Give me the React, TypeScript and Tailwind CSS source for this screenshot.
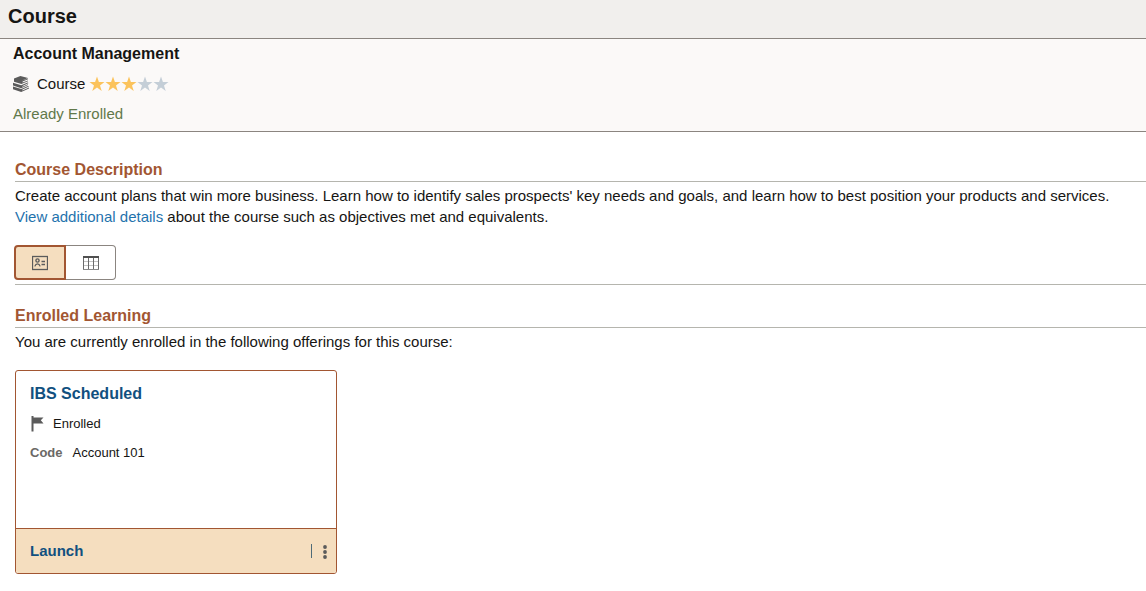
import React from "react";

const star = "M8 0.6 L9.9 6 L15.5 6 L11 9.4 L12.7 15 L8 11.6 L3.3 15 L5 9.4 L0.5 6 L6.1 6 Z";

function Stars({ value, total }: { value: number; total: number }) {
  return (
    <span role="img" aria-label={`${value} of ${total} stars`} className="flex">
      {Array.from({ length: total }, (_, i) => (
        <svg
          key={i}
          viewBox="0 0 16 16"
          className={i < value ? "size-4 fill-[#fbc35c]" : "size-4 fill-[#c4ced7]"}
        >
          <path d={star} />
        </svg>
      ))}
    </span>
  );
}

function BooksIcon() {
  return (
    <svg viewBox="0 0 16 16" className="size-4" aria-hidden="true">
      <g fill="#5b5b5b">
        <path d="M1 2.4 L7.4 0 L15 1.9 L8.4 4.7 L15 2.5 V3.2 L9.6 5.6 V6.6 L15 4.4 V5.2 L8.4 8.1 L1 5.8 Z" />
        <path d="M0 6.7 L8.2 9.3 L14.6 6.4 L15.6 7 L9.4 9.9 V10.8 L15 8.3 V9.1 L8.2 12.2 L0 9.6 Z" />
        <path d="M0 10.4 L8.2 13.1 L15 10 L16 10.6 L9.4 13.6 V14.4 L16 11.5 V12.4 L8.2 16 L0 13.2 Z" />
      </g>
    </svg>
  );
}

function CardIcon() {
  return (
    <svg viewBox="0 0 16 16" className="size-4" fill="none" stroke="#5b5b5b" aria-hidden="true">
      <rect x="0.5" y="1.5" width="15" height="13" strokeWidth="1.3" />
      <circle cx="5.5" cy="5.5" r="1.6" strokeWidth="1.4" />
      <path d="M2.8 11.4 C3.4 9.6 4.4 8.8 5.5 8.8 C6.6 8.8 7.6 9.6 8.2 11.4" strokeWidth="1.3" />
      <path d="M9.5 6.5 H13 M9.5 9.5 H13" strokeWidth="1.3" />
    </svg>
  );
}

function TableIcon() {
  return (
    <svg viewBox="0 0 16 16" className="size-4" fill="none" aria-hidden="true">
      <path d="M0 6.5 H16 M0 10.5 H16" stroke="#c4c4c4" />
      <path d="M0.5 1 V15 M5.5 1 V15 M10.5 1 V15 M15.5 1 V15" stroke="#6b6b6b" />
      <path d="M0 14.5 H16" stroke="#8a8a8a" />
      <path d="M0 2 H16" stroke="#505050" strokeWidth="2" />
    </svg>
  );
}

function Heading({ children }: { children: React.ReactNode }) {
  return (
    <h2 className="border-b border-[#b5b5ae] pt-0.5 text-base leading-[22px] font-bold text-[#a25632]">
      {children}
    </h2>
  );
}

export default function App() {
  return (
    <div className="min-h-screen bg-white pb-4 font-['Liberation_Sans',Arial,sans-serif] text-[15px] leading-[21px] text-[#161513]">
      <header className="border-b border-[#8b8580] bg-[#f1efed] px-2 pt-px pb-[7px]">
        <h1 className="text-xl leading-[30px] font-bold">Course</h1>
      </header>

      <section className="border-b border-[#8b8580] bg-[#fbf9f8] px-[13px] pt-1 pb-[7px]">
        <h2 className="text-base leading-[22px] font-bold">Account Management</h2>
        <div className="mt-2 flex items-center">
          <BooksIcon />
          <span className="ml-2 mr-1">Course</span>
          <Stars value={3} total={5} />
        </div>
        <p className="mt-[9px] text-[#61784a]">Already Enrolled</p>
      </section>

      <main className="pt-[25px] pl-[15px]">
        <Heading>Course Description</Heading>
        <p className="mt-[3px]">
          Create account plans that win more business. Learn how to identify sales prospects' key
          needs and goals, and learn how to best position your products and services.
          <br />
          <a href="#details" className="text-[#1f73ad]">
            View additional details
          </a>{" "}
          about the course such as objectives met and equivalents.
        </p>

        <div className="mt-[18px] border-b border-[#b5b5ae] pb-1">
          <div role="group" aria-label="View" className="-ml-px flex">
            <button
              type="button"
              aria-label="Card view"
              aria-pressed="true"
              className="flex h-[35px] w-[52px] items-center justify-center rounded-l border-2 border-[#a25632] bg-[#f5debf]"
            >
              <CardIcon />
            </button>
            <button
              type="button"
              aria-label="Table view"
              aria-pressed="false"
              className="flex h-[35px] w-[50px] items-center justify-center rounded-r border border-l-0 border-[#8b8580] bg-white"
            >
              <TableIcon />
            </button>
          </div>
        </div>

        <div className="mt-[18px]">
          <Heading>Enrolled Learning</Heading>
        </div>
        <p className="mt-[3px]">You are currently enrolled in the following offerings for this course:</p>

        <article className="mt-[18px] w-[322px] max-w-full rounded-[3px] border border-[#a25632]">
          <div className="min-h-[157px] px-[14px] pt-[13px] text-[13px] leading-5">
            <h3 className="text-base leading-5 font-bold text-[#11507f]">IBS Scheduled</h3>
            <div className="mt-[10px] flex items-center">
              <svg viewBox="0 0 16 16" className="size-4 fill-[#5b5b5b]" aria-hidden="true">
                <path d="M1.5 0 H3.5 V1.5 H13.5 L10.8 4.3 L13.5 7.5 H3.5 V15.5 H1.5 Z" />
              </svg>
              <span className="ml-[7px]">Enrolled</span>
            </div>
            <dl className="mt-[9px] flex gap-[10px]">
              <dt className="font-bold text-[#6b6966]">Code</dt>
              <dd>Account 101</dd>
            </dl>
          </div>
          <footer className="flex h-[45px] items-center rounded-b-[2px] border-t border-[#a25632] bg-[#f5debf] pr-[3px] pl-[14px]">
            <button type="button" className="pb-0.5 font-bold text-[#11507f]">
              Launch
            </button>
            <span className="ml-auto h-[14px] w-px bg-[#4f6b78]" />
            <button type="button" aria-label="More actions" className="ml-[5px] flex size-4 items-center justify-center">
              <svg viewBox="0 0 16 16" className="size-4 fill-[#5b5b5b]" aria-hidden="true">
                <circle cx="8" cy="4" r="1.9" />
                <circle cx="8" cy="9" r="1.9" />
                <circle cx="8" cy="14" r="1.9" />
              </svg>
            </button>
          </footer>
        </article>
      </main>
    </div>
  );
}
